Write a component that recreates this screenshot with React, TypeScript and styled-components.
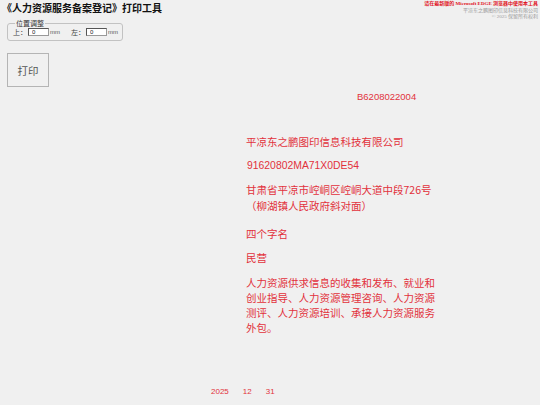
import React from "react";
import styled, { createGlobalStyle } from "styled-components";

const GlobalStyle = createGlobalStyle`
  html, body { margin: 0; padding: 0; background: #f0f0f0; }
  body { font-family: "Noto Sans CJK SC", "Liberation Sans", sans-serif; width: 540px; height: 405px; overflow: hidden; }
`;

const Page = styled.div`
  width: 540px;
  height: 405px;
  background: #f0f0f0;
  display: flex;
  flex-direction: column;
`;

const Header = styled.div`
  display: flex;
  justify-content: space-between;
  align-items: flex-start;
  height: 19px;
`;

const Title = styled.h1`
  margin: 0;
  padding: 1px 0 0 2px;
  font-size: 10px;
  line-height: 13px;
  font-weight: 700;
  color: #111;
  font-family: "Noto Sans CJK SC", sans-serif;
`;

const Notice = styled.div`
  padding: 1px 2px 0 0;
  text-align: right;
  font-size: 5px;
  line-height: 6.5px;
`;

const NoticeLine = styled.div<{ $strong?: boolean }>`
  color: ${(p) => (p.$strong ? "#e0101a" : "#9a9a9a")};
  font-weight: ${(p) => (p.$strong ? 700 : 400)};
  font-family: "Liberation Serif", "Noto Sans CJK SC", serif;
`;

const Adjust = styled.fieldset`
  margin: 0 0 0 7px;
  padding: 0 4px 1px 5px;
  width: 105px;
  height: 19px;
  border: 1px solid #c2c2c2;
  border-radius: 3px;
  display: flex;
  align-items: center;
  font-size: 7px;
  color: #444;
`;

const Legend = styled.legend`
  padding: 0 1px;
  margin-left: 2px;
  font-size: 7px;
  line-height: 8px;
  color: #333;
`;

const AdjustLabel = styled.span<{ $gap?: number }>`
  margin-left: ${(p) => p.$gap ?? 0}px;
  font-size: 7px;
  color: #444;
  white-space: nowrap;
`;

const SmallInput = styled.input`
  height: 6px;
  box-sizing: content-box;
  padding: 0 0 0 3px;
  margin: 0 1px 0 1px;
  border: 1px solid #555;
  border-right-color: #999;
  border-bottom-color: #999;
  background: #fff;
  font-size: 6px;
  line-height: 6px;
  color: #222;
  font-family: "Liberation Sans", sans-serif;
  width: 16px;
`;

const Unit = styled.span`
  font-size: 6px;
  color: #555;
  font-family: "Liberation Sans", sans-serif;
`;

const PrintButton = styled.button`
  margin: 12px 0 0 7px;
  width: 42px;
  height: 34px;
  border: 1px solid #b4b4b4;
  background: #f0f0f0;
  color: #555;
  font-size: 10.5px;
  font-family: "Noto Sans CJK SC", sans-serif;
  padding: 0;
  align-self: flex-start;
`;

const Sheet = styled.div`
  display: flex;
  flex-direction: column;
  align-items: flex-start;
  color: #e2323c;
`;

const Field = styled.div<{ $top: number; $left: number; $lh: number; $size?: number; $latin?: boolean; $width?: number }>`
  margin-top: ${(p) => p.$top}px;
  margin-left: ${(p) => p.$left}px;
  line-height: ${(p) => p.$lh}px;
  font-size: ${(p) => p.$size ?? 10.5}px;
  font-family: ${(p) =>
    p.$latin ? `"Liberation Sans", Arial, sans-serif` : `"Noto Sans CJK SC", sans-serif`};
  width: ${(p) => (p.$width ? `${p.$width}px` : "auto")};
  color: #e2323c;
`;

const DateRow = styled.div`
  margin-top: 52px;
  margin-left: 211px;
  display: flex;
  gap: 14px;
  font-family: "Liberation Sans", Arial, sans-serif;
  font-size: 8px;
  line-height: 10px;
  color: #e2323c;
`;

export default function App() {
  return (
    <>
      <GlobalStyle />
      <Page>
        <Header>
          <Title>《人力资源服务备案登记》打印工具</Title>
          <Notice>
            <NoticeLine $strong>请在最新版的 Microsoft EDGE 浏览器中使用本工具</NoticeLine>
            <NoticeLine>平凉东之鹏图印信息科技有限公司</NoticeLine>
            <NoticeLine>© 2025 保留所有权利</NoticeLine>
          </Notice>
        </Header>
        <Adjust>
          <Legend>位置调整</Legend>
          <AdjustLabel>上：</AdjustLabel>
          <SmallInput defaultValue="0" />
          <Unit>mm</Unit>
          <AdjustLabel $gap={11}>左：</AdjustLabel>
          <SmallInput defaultValue="0" />
          <Unit>mm</Unit>
        </Adjust>
        <PrintButton>打印</PrintButton>
        <Sheet>
          <Field $top={4} $left={357} $lh={12} $size={9.5} $latin>B6208022004</Field>
          <Field $top={32} $left={246} $lh={14}>平凉东之鹏图印信息科技有限公司</Field>
          <Field $top={10} $left={247} $lh={14} $size={10.4} $latin>91620802MA71X0DE54</Field>
          <Field $top={9} $left={246} $lh={16}>
            甘肃省平凉市崆峒区崆峒大道中段726号
            <br />
            （柳湖镇人民政府斜对面）
          </Field>
          <Field $top={13} $left={246} $lh={14}>四个字名</Field>
          <Field $top={10} $left={246} $lh={14}>民营</Field>
          <Field $top={10} $left={246} $lh={15} $width={192}>
            人力资源供求信息的收集和发布、就业和创业指导、人力资源管理咨询、人力资源测评、人力资源培训、承接人力资源服务外包。
          </Field>
        </Sheet>
        <DateRow>
          <span>2025</span>
          <span>12</span>
          <span>31</span>
        </DateRow>
      </Page>
    </>
  );
}
